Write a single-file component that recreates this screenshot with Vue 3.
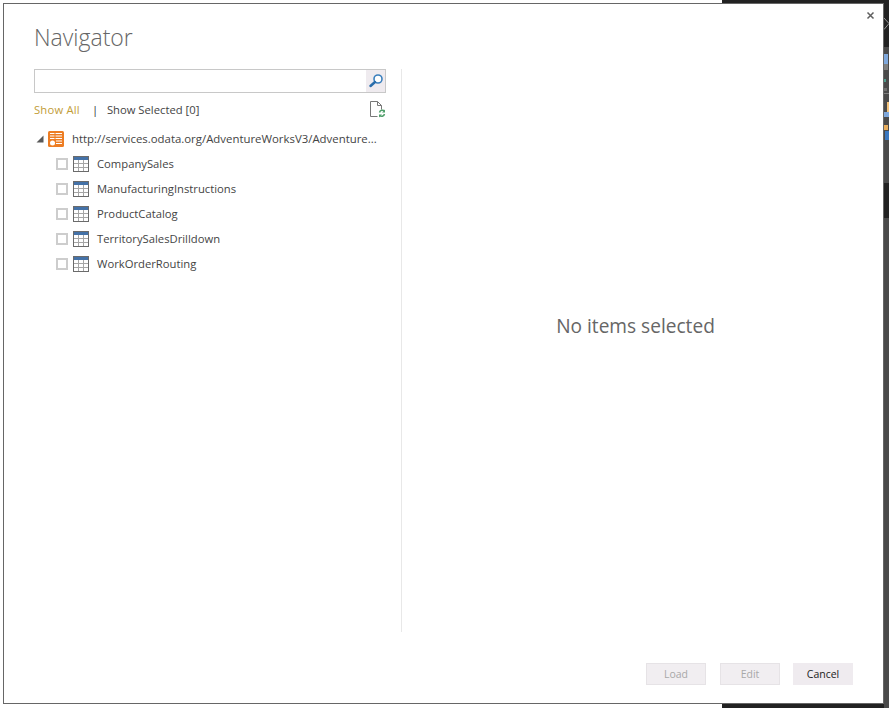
<script setup>
const items = ['CompanySales', 'ManufacturingInstructions', 'ProductCatalog', 'TerritorySalesDrilldown', 'WorkOrderRouting']
</script>

<template>
  <div class="page">
    <div class="dialog">
      <button class="close" aria-label="Close">
        <svg width="9" height="9" viewBox="0 0 9 9"><path d="M1.5 1.5l6 6M7.5 1.5l-6 6" stroke="#5f5f5f" stroke-width="1.5" fill="none"/></svg>
      </button>
      <h1 class="title">Navigator</h1>
      <div class="body">
        <div class="left">
          <div class="search">
            <div class="search-btn">
              <svg width="16" height="16" viewBox="0 0 16 16">
                <circle cx="10" cy="6" r="4" fill="#fff" stroke="#3a7fbd" stroke-width="1.6"/>
                <path d="M7 9L2.500 13" stroke="#2a6dab" stroke-width="2.500" stroke-linecap="round"/>
              </svg>
            </div>
          </div>
          <div class="filters">
            <span class="show-all">Show All</span>
            <span class="sep">|</span>
            <span class="show-sel">Show Selected [0]</span>
            <svg class="refresh" width="17" height="18" viewBox="0 0 17 18">
              <path d="M1.5 1.5h7l4 4v4M1.5 1.5v15h7M8.5 1.5v4h4" fill="none" stroke="#777" stroke-width="1"/>
              <path d="M10.5 12.5a3 3 0 0 1 5-1.500M15.500 14a3 3 0 0 1-5 1.500" fill="none" stroke="#4f9e6a" stroke-width="1.500"/>
              <path d="M16 9.500v3h-3zM10 17.500v-3h3z" fill="#4f9e6a"/>
            </svg>
          </div>
          <div class="tree">
            <div class="root">
              <svg class="caret" width="8" height="8" viewBox="0 0 8 8"><path d="M7.500 0.500v7h-7z" fill="#595959"/></svg>
              <svg class="feed" width="16" height="16" viewBox="0 0 16 16">
                <rect width="16" height="16" rx="1.500" fill="#ed7d23"/>
                <path d="M2 2.500h12M2 5h12M2 7.500h12M8 10h6M8 12.500h6" stroke="#fff" stroke-width="1" fill="none"/>
                <path d="M7 2v6" stroke="#ed7d23" stroke-width="1" fill="none"/>
                <circle cx="4.500" cy="12" r="2.500" fill="#fff"/>
              </svg>
              <span class="root-label">http://services.odata.org/AdventureWorksV3/Adventure...</span>
            </div>
            <div v-for="item in items" :key="item" class="row">
              <span class="check"></span>
              <svg class="table" width="16" height="16" viewBox="0 0 16 16">
                <rect x="0.500" y="0.500" width="15" height="15" fill="#fff" stroke="#6b6b6b"/>
                <rect x="1" y="1" width="14" height="3" fill="#4472a8"/>
                <path d="M5.500 4v11M10.500 4v11M1 7.500h14M1 11.500h14" stroke="#a6a6a6" stroke-width="1" fill="none"/>
              </svg>
              <span class="label">{{ item }}</span>
            </div>
          </div>
        </div>
        <div class="right">No items selected</div>
      </div>
      <div class="footer">
        <button class="btn disabled">Load</button>
        <button class="btn disabled">Edit</button>
        <button class="btn cancel">Cancel</button>
      </div>
    </div>
    <div class="strip">
      <svg class="chev" width="5" height="14" viewBox="0 0 5 14"><path d="M0 1l5 5.500-5 6" fill="none" stroke="#9a9a9a" stroke-width="1"/></svg>
      <div class="panel">
        <i class="s-blue"></i>
        <i class="s-gray"></i>
        <i class="s-teal"></i>
        <i class="s-dot"></i>
        <i class="s-line"></i>
        <i class="s-tan"></i>
        <i class="s-lblue"></i>
        <i class="s-orange"></i>
        <i class="s-dblue"></i>
      </div>
      <div class="gap"></div>
      <div class="panel2"></div>
    </div>
  </div>
</template>

<style>
html, body { margin: 0; background: #fff; }
</style>

<style scoped>
.page {
  width: 889px;
  height: 708px;
  display: flex;
  box-sizing: border-box;
  padding: 3px 0 4px 3px;
  overflow: hidden;
  background: linear-gradient(90deg, #fff 722px, #222 722px);
  font-family: "Open Sans", "Noto Sans", sans-serif;
}
.dialog {
  position: relative;
  width: 881px;
  box-sizing: border-box;
  border: 1px solid #666;
  background: #fff;
  display: flex;
  flex-direction: column;
}
.close {
  position: absolute;
  top: 7px;
  right: 8px;
  padding: 0;
  border: 0;
  background: none;
  width: 9px;
  height: 9px;
  display: flex;
}
.title {
  margin: 0;
  height: 65px;
  box-sizing: border-box;
  padding: 16px 0 0 30px;
  font-size: 23px;
  line-height: 34px;
  font-weight: 300;
  color: #666;
}
.body {
  height: 563px;
  display: flex;
}
.left {
  width: 398px;
  flex-shrink: 0;
  box-sizing: border-box;
  padding: 0 15px 0 30px;
  border-right: 1px solid #e8e8e8;
}
.search {
  height: 24px;
  box-sizing: border-box;
  border: 1px solid #c8c8c8;
  display: flex;
  justify-content: flex-end;
}
.search-btn {
  width: 19px;
  background: #efebef;
  display: flex;
  align-items: center;
  justify-content: center;
}
.filters {
  height: 26px;
  margin-top: 3px;
  display: flex;
  align-items: center;
  font-size: 11.25px;
  color: #444;
}
.show-all { color: #c29d38; letter-spacing: 0.2px; }
.sep { margin-left: 12px; width: 15px; color: #333; }
.show-sel { flex: 1; }
.refresh { flex-shrink: 0; }
.tree { margin-top: 4px; font-size: 11.25px; color: #444; }
.root {
  height: 25px;
  display: flex;
  align-items: center;
}
.caret { margin-left: 2px; flex-shrink: 0; }
.feed { margin-left: 4px; flex-shrink: 0; }
.root-label { margin-left: 8px; white-space: nowrap; font-size: 11.4px; }
.row {
  height: 25px;
  display: flex;
  align-items: center;
  padding-left: 22px;
}
.check {
  width: 12px;
  height: 12px;
  box-sizing: border-box;
  border: 2px solid #cdcdcd;
}
.table { margin-left: 5px; }
.label { margin-left: 8px; }
.right {
  flex: 1;
  display: flex;
  align-items: center;
  justify-content: center;
  padding-bottom: 49px;
  padding-right: 14px;
  font-size: 19.1px;
  color: #666;
}
.footer {
  flex: 1;
  display: flex;
  justify-content: flex-end;
  align-items: flex-start;
  padding: 31px 30px 0 0;
  gap: 14px;
}
.btn {
  width: 60px;
  height: 22px;
  padding: 0;
  border: 1px solid #efebef;
  background: #efebef;
  font: inherit;
  font-size: 10.5px;
  color: #222;
}
.cancel { margin-left: -1px; }
.btn.disabled {
  background: #f1eef1;
  border-color: #e6e3e6;
  color: #a8a8a8;
}
.strip {
  flex: 1;
  margin-top: -3px;
  margin-bottom: -4px;
  display: flex;
  flex-direction: column;
  background: #222;
  position: relative;
}
.chev { position: absolute; top: 17px; left: 0; }
.panel {
  margin-top: 47px;
  height: 136px;
  background: #4a4a4a;
  position: relative;
}
.panel i { position: absolute; display: block; }
.s-blue { left: 0; top: 7px; width: 4px; height: 10px; background: #7fa8dc; }
.s-gray { left: 0; top: 17px; width: 4px; height: 6px; background: #808080; }
.s-teal { left: 0; top: 32px; width: 2px; height: 3px; background: #4f9c8c; }
.s-dot { left: 0; top: 41px; width: 3px; height: 3px; background: #6f6f6f; }
.s-line { left: 0; top: 46px; width: 5px; height: 1px; background: #808080; }
.s-tan { left: 3px; top: 55px; width: 2px; height: 10px; background: #f3c27a; }
.s-lblue { left: 0; top: 65px; width: 5px; height: 5px; background: #7fa8dc; }
.s-orange { left: 0; top: 78px; width: 4px; height: 5px; background: #e8ad5c; }
.s-dblue { left: 1px; top: 84px; width: 4px; height: 9px; background: #3a78c0; }
.gap { height: 35px; }
.panel2 { flex: 1; background: #4a4a4a; }
</style>
